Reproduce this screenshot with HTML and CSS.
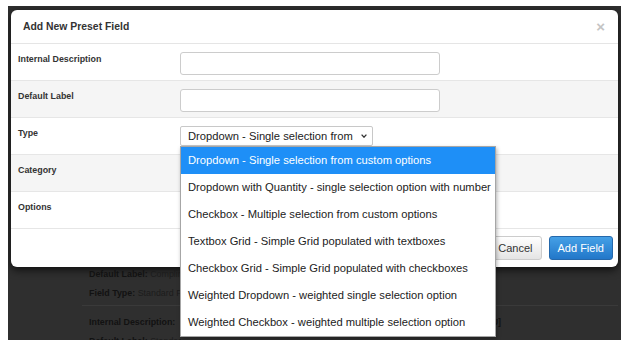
FILE: index.html
```html
<!DOCTYPE html>
<html lang="en">
<head>
    <meta charset="UTF-8">
    <title>Add New Preset Field</title>
    <link rel="stylesheet" href="styles.css">
</head>
<body>
<div class="backdrop">
    <!-- modal -->
    <div class="modal">
        <div class="modal-header">
            <h4>Add New Preset Field</h4>
            <span class="close">&times;</span>
        </div>
        <div class="modal-body">
            <div class="form-row">
                <label>Internal Description</label>
                <input type="text" class="text-input">
            </div>
            <div class="form-row alt">
                <label>Default Label</label>
                <input type="text" class="text-input">
            </div>
            <div class="form-row">
                <label>Type</label>
                <div class="select-wrap">
                    <div class="select">
                        <span class="select-text">Dropdown - Single selection from custom options</span>
                        <svg class="chevron" width="6" height="4" viewBox="0 0 6 4"><polyline points="0.6,0.6 3,3.2 5.4,0.6" fill="none" stroke="#333" stroke-width="1.3"/></svg>
                    </div>
                    <!-- open list -->
                    <ul class="options">
                        <li class="selected">Dropdown - Single selection from custom options</li>
                        <li>Dropdown with Quantity - single selection option with number</li>
                        <li>Checkbox - Multiple selection from custom options</li>
                        <li>Textbox Grid - Simple Grid populated with textboxes</li>
                        <li>Checkbox Grid - Simple Grid populated with checkboxes</li>
                        <li>Weighted Dropdown - weighted single selection option</li>
                        <li>Weighted Checkbox - weighted multiple selection option</li>
                    </ul>
                </div>
            </div>
            <div class="form-row alt">
                <label>Category</label>
            </div>
            <div class="form-row">
                <label>Options</label>
            </div>
        </div>
        <div class="modal-footer">
            <button class="btn">Cancel</button>
            <button class="btn btn-primary">Add Field</button>
        </div>
    </div>

    <!-- page behind the modal, partly covered by the open list -->
    <div class="details">
        <p><span class="clip"><b>Default Label:</b> Complimentary</span></p>
        <p><span class="clip"><b>Field Type:</b> Standard Field</span></p>
        <div class="divider"></div>
        <p><span class="clip"><b>Internal Description:</b></span><span class="tail">[MENU]</span></p>
        <p><span class="clip"><b>Default Label:</b> Standard Type</span></p>
    </div>
</div>
</body>
</html>
```

FILE: styles.css
```css
html, body {
    margin: 0;
    padding: 0;
    background-color: #fff;
    font-family: "Liberation Sans", Arial, sans-serif;
}

.backdrop {
    margin: 6px 13px 0 8px;
    height: 334px;
    padding: 4px 3px 0;
    box-sizing: border-box;
    background-color: #2f2f2f;
    overflow: hidden;
}

.modal {
    background-color: #fff;
    border-radius: 6px;
    box-shadow: 0 3px 9px rgba(0, 0, 0, 0.7);
}

.modal-header {
    display: flex;
    align-items: center;
    height: 34px;
    padding: 0 13px 0 12px;
    box-sizing: border-box;
    border-bottom: 1px solid #e5e5e5;
}

.modal-header h4 {
    margin: 0;
    font-size: 10.4px;
    font-weight: bold;
    color: #333;
}

.close {
    margin-left: auto;
    font-size: 15px;
    font-weight: bold;
    color: #c4c4c4;
    line-height: 1;
}

.form-row {
    display: grid;
    grid-template-columns: 162px 1fr;
    align-items: start;
    height: 37px;
    padding: 8px 0 0 7px;
    box-sizing: border-box;
    border-bottom: 1px solid #e6e6e6;
}

.form-row.alt {
    background-color: #f5f5f5;
}

.form-row label {
    font-size: 8.9px;
    font-weight: bold;
    color: #333;
    line-height: 14px;
}

.text-input {
    width: 260px;
    height: 23px;
    margin: 0;
    padding: 0 6px;
    box-sizing: border-box;
    border: 1px solid #ccc;
    border-radius: 3px;
    background-color: #fff;
}

.select-wrap {
    position: relative;
}

.select {
    display: flex;
    align-items: center;
    width: 193px;
    height: 20px;
    padding-left: 7px;
    box-sizing: border-box;
    border: 1px solid #c8c8c8;
    border-radius: 2px;
    background-color: #fff;
    font-size: 11.2px;
    color: #222;
}

.select-text {
    width: 167px;
    white-space: nowrap;
    overflow: hidden;
}

.chevron {
    margin-left: 6px;
}

.options {
    position: absolute;
    top: 20px;
    left: 0;
    width: 314px;
    margin: 0;
    padding: 0;
    list-style: none;
    background-color: #fff;
    border: 1px solid #a6a6a6;
    box-shadow: 1px 2px 4px rgba(0, 0, 0, 0.3);
    z-index: 5;
}

.options li {
    height: 27px;
    line-height: 27px;
    padding-left: 7px;
    font-size: 11.2px;
    color: #222;
    white-space: nowrap;
}

.options li.selected {
    background-color: #1e8ff7;
    color: #fff;
}

.modal-footer {
    display: flex;
    justify-content: flex-end;
    gap: 7px;
    height: 38px;
    padding: 7px 5px 0 0;
    box-sizing: border-box;
}

.btn {
    height: 24px;
    padding: 0 8px;
    font-family: inherit;
    font-size: 11px;
    color: #333;
    border: 1px solid #ccc;
    border-radius: 3px;
    background: linear-gradient(#fff, #e4e4e4);
}

.btn-primary {
    color: #fff;
    border-color: #2568ab;
    background: linear-gradient(#45a0e6, #2277c9);
}

.details {
    margin-top: -2px;
    padding-left: 78px;
    font-size: 8.9px;
    color: #1c1c1c;
}

.details p {
    display: flex;
    margin: 0;
    line-height: 19px;
    white-space: nowrap;
}

.details .clip {
    width: 92px;
    flex-shrink: 0;
    overflow: hidden;
}

.details .tail {
    margin-left: 288px;
    font-weight: bold;
    color: #121212;
}

.details b {
    color: #121212;
}

.divider {
    margin: 2px 0 7px -7px;
    border-top: 1px solid #3a3a3a;
}
```
